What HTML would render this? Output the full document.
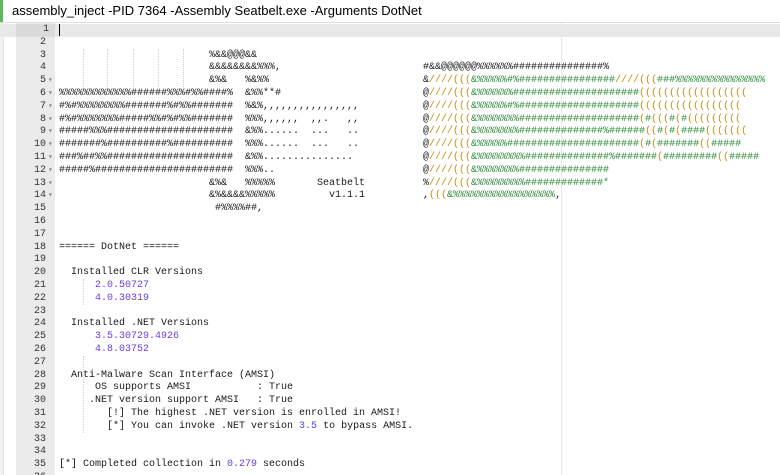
<!DOCTYPE html>
<html><head><meta charset="utf-8"><style>
html,body{margin:0;padding:0;width:780px;height:475px;overflow:hidden;background:#fff;}
#title{position:absolute;left:0;top:0;width:780px;height:22px;border-bottom:1px solid #ddd;font:13px "Liberation Sans",Arial,sans-serif;color:#000;line-height:21px;}
#title .bar{position:absolute;left:0;top:0;width:3px;height:22px;background:#5cb85c;}
#title span{position:absolute;left:12px;top:0;}
#lb{position:absolute;left:0;top:23px;width:3px;height:452px;background:#f2f2f2;border-right:1px solid #e2e2e2}
#gut{position:absolute;left:16px;top:23px;width:39px;height:452px;background:#ebebeb;}
#ed{position:absolute;left:0;top:23px;padding-top:1px;width:780px;height:451px;overflow:hidden;font:10px "Liberation Mono",monospace;}
.r{height:12.8px;line-height:12.8px;position:relative;white-space:pre;}
.n{position:absolute;left:16px;width:30px;text-align:right;color:#333;}
.f{position:absolute;left:48px;color:#888;font-size:8px;}
.t{position:absolute;left:59px;color:#1a1a1a;}
.rt{position:absolute;left:423px;color:#1a1a1a;}
.a{background:#e8e8e8;}
.a .n{background:#dadada;width:39px;}
.p{color:#6a3ee0}
.o{color:#c98b14}.g{color:#2e8b3a}
#m{position:absolute;left:561px;top:23px;width:1px;height:452px;background:#e6e6e6}
.ig{position:absolute;width:0;border-left:1px dotted #ccc}
</style></head><body>
<div id="title"><div class="bar"></div><span>assembly_inject -PID 7364 -Assembly Seatbelt.exe -Arguments DotNet</span></div>
<div id="lb"></div><div id="gut"></div><div id="m"></div>
<div class="ig" style="left:83px;top:49px;height:38px"></div>
<div class="ig" style="left:107px;top:49px;height:38px"></div>
<div class="ig" style="left:133px;top:49px;height:38px"></div>
<div class="ig" style="left:158px;top:49px;height:38px"></div>
<div class="ig" style="left:183px;top:49px;height:38px"></div>
<div class="ig" style="left:83px;top:279px;height:26px"></div>
<div class="ig" style="left:83px;top:356px;height:26px"></div>
<div class="ig" style="left:83px;top:381px;height:52px"></div>
<div id="ed">
<div class="r a"><span class="n">1 </span><span class="t" style="border-left:1px solid #000;height:12px;top:0"></span></div>
<div class="r"><span class="n">2</span></div>
<div class="r"><span class="n">3</span><span class="t">                         %&amp;&amp;@@@&amp;&amp;</span></div>
<div class="r"><span class="n">4</span><span class="t">                         &amp;&amp;&amp;&amp;&amp;&amp;&amp;&amp;%%%,</span><span class="rt">#&amp;&amp;@@@@@@%%%%%%###############%</span></div>
<div class="r"><span class="n">5</span><span class="f">▾</span><span class="t">                         &amp;%&amp;   %&amp;%%</span><span class="rt">&amp;<span class="o">////(((</span><span class="g">&amp;%%%%%#%################</span><span class="o">////(((</span><span class="g">###%%%%%%%%%%%%%%%</span></span></div>
<div class="r"><span class="n">6</span><span class="f">▾</span><span class="t">%%%%%%%%%%%%######%%%#%%####%  &amp;%%**#</span><span class="rt">@<span class="o">////(((</span><span class="g">&amp;%%%%%%#####################</span><span class="o">((((((((((((((((((</span></span></div>
<div class="r"><span class="n">7</span><span class="f">▾</span><span class="t">#%#%%%%%%%%#######%#%%#######  %&amp;%,,,,,,,,,,,,,,,,</span><span class="rt">@<span class="o">////(((</span><span class="g">&amp;%%%%%#%####################</span><span class="o">(((((((((((((((((</span></span></div>
<div class="r"><span class="n">8</span><span class="f">▾</span><span class="t">#%#%%%%%%%#####%%#%#%%#######  %%%,,,,,,  ,,.   ,,</span><span class="rt">@<span class="o">////(((</span><span class="g">&amp;%%%%%%%####################</span><span class="o">(</span><span class="g">#</span><span class="o">(((</span><span class="g">#</span><span class="o">(</span><span class="g">#</span><span class="o">(((((((((</span></span></div>
<div class="r"><span class="n">9</span><span class="f">▾</span><span class="t">#####%%%#####################  &amp;%%......  ...   ..</span><span class="rt">@<span class="o">////(((</span><span class="g">&amp;%%%%%%%##############%######</span><span class="o">((</span><span class="g">#</span><span class="o">(</span><span class="g">#</span><span class="o">(</span><span class="g">####</span><span class="o">(((((((</span></span></div>
<div class="r"><span class="n">10</span><span class="f">▾</span><span class="t">#######%##########%##########  %%%......  ...   ..</span><span class="rt">@<span class="o">////(((</span><span class="g">&amp;%%%%%######################</span><span class="o">(</span><span class="g">#</span><span class="o">(</span><span class="g">#######</span><span class="o">((</span><span class="g">#####</span></span></div>
<div class="r"><span class="n">11</span><span class="f">▾</span><span class="t">###%##%%#####################  &amp;%%...............</span><span class="rt">@<span class="o">////(((</span><span class="g">&amp;%%%%%%%%##############%#######</span><span class="o">(</span><span class="g">#########</span><span class="o">((</span><span class="g">#####</span></span></div>
<div class="r"><span class="n">12</span><span class="f">▾</span><span class="t">#####%#######################  %%%..</span><span class="rt">@<span class="o">////(((</span><span class="g">&amp;%%%%%%%###############</span></span></div>
<div class="r"><span class="n">13</span><span class="f">▾</span><span class="t">                         &amp;%&amp;   %%%%%       Seatbelt</span><span class="rt">%<span class="o">////(((</span><span class="g">&amp;%%%%%%%%#############*</span></span></div>
<div class="r"><span class="n">14</span><span class="f">▾</span><span class="t">                         &amp;%&amp;&amp;&amp;&amp;%%%%%         v1.1.1</span><span class="rt">,<span class="o">(((</span><span class="g">&amp;%%%%%%%%%%%%%%%%%</span>,</span></div>
<div class="r"><span class="n">15</span><span class="t">                          #%%%%##,</span></div>
<div class="r"><span class="n">16</span></div>
<div class="r"><span class="n">17</span></div>
<div class="r"><span class="n">18</span><span class="t">====== DotNet ======</span></div>
<div class="r"><span class="n">19</span></div>
<div class="r"><span class="n">20</span><span class="t">  Installed CLR Versions</span></div>
<div class="r"><span class="n">21</span><span class="t">      <span class="p">2.0.50727</span></span></div>
<div class="r"><span class="n">22</span><span class="t">      <span class="p">4.0.30319</span></span></div>
<div class="r"><span class="n">23</span></div>
<div class="r"><span class="n">24</span><span class="t">  Installed .NET Versions</span></div>
<div class="r"><span class="n">25</span><span class="t">      <span class="p">3.5.30729.4926</span></span></div>
<div class="r"><span class="n">26</span><span class="t">      <span class="p">4.8.03752</span></span></div>
<div class="r"><span class="n">27</span></div>
<div class="r"><span class="n">28</span><span class="t">  Anti-Malware Scan Interface (AMSI)</span></div>
<div class="r"><span class="n">29</span><span class="t">      OS supports AMSI           : True</span></div>
<div class="r"><span class="n">30</span><span class="t">     .NET version support AMSI   : True</span></div>
<div class="r"><span class="n">31</span><span class="t">        [!] The highest .NET version is enrolled in AMSI!</span></div>
<div class="r"><span class="n">32</span><span class="t">        [*] You can invoke .NET version <span class="p">3.5</span> to bypass AMSI.</span></div>
<div class="r"><span class="n">33</span></div>
<div class="r"><span class="n">34</span></div>
<div class="r"><span class="n">35</span><span class="t">[*] Completed collection in <span class="p">0.279</span> seconds</span></div>
<div class="r"><span class="n">36</span></div>
</div>
</body></html>
